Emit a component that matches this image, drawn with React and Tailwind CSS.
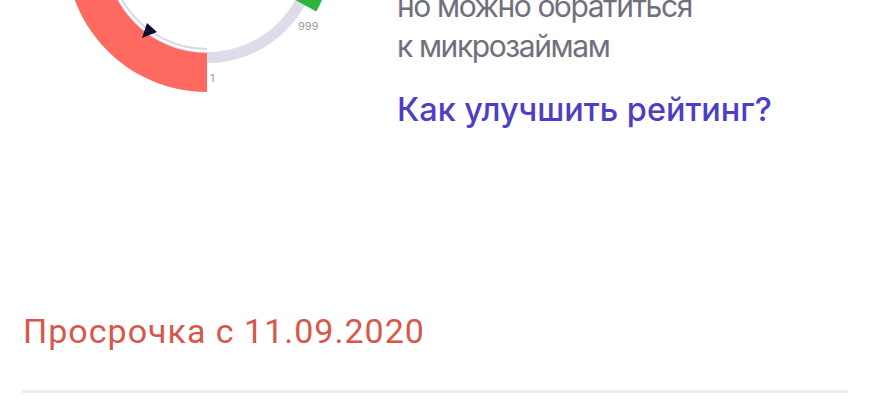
import React from "react";

const CX = 207;
const CY = -49;

function pt(r, deg) {
  const a = (deg * Math.PI) / 180;
  return [CX + r * Math.cos(a), CY + r * Math.sin(a)];
}

function sector(r1, r2, a1, a2) {
  const large = Math.abs(a2 - a1) > 180 ? 1 : 0;
  const [x1, y1] = pt(r2, a1);
  const [x2, y2] = pt(r2, a2);
  const [x3, y3] = pt(r1, a2);
  const [x4, y4] = pt(r1, a1);
  return `M${x1} ${y1} A${r2} ${r2} 0 ${large} 1 ${x2} ${y2} L${x3} ${y3} A${r1} ${r1} 0 ${large} 0 ${x4} ${y4} Z`;
}

function Gauge() {
  return (
    <svg
      width="390"
      height="110"
      viewBox="0 -14 390 110"
      className="block shrink-0"
    >
      <circle cx={CX} cy={CY} r={106.5} fill="none" stroke="#dcdde8" strokeWidth="11" />
      <path d={sector(97, 99, 90, 200)} fill="#d6d8e4" />
      <path d={sector(102, 141, 90, 200)} fill="#ff6a60" />
      <path d={sector(100, 125, 330, 389)} fill="#2bb53a" />
      <polygon points="147,23 157,32 142,38" fill="#0b0f2e" />
      <text x="298" y="30" fontSize="11" fill="#9c9ca4" fontFamily="Inter, sans-serif">999</text>
      <text x="210" y="82" fontSize="11" fill="#9c9ca4" fontFamily="Inter, sans-serif">1</text>
    </svg>
  );
}

export default function App() {
  return (
    <div className="w-[870px] h-[400px] overflow-hidden bg-white">
      <div className="flex items-start -mt-[14px]">
        <Gauge />
        <div className="ml-[7px] flex flex-col font-['Inter',sans-serif]">
          <div className="text-[30px] leading-[40px] tracking-[-1.4px] text-[#70707c] whitespace-nowrap">
            но можно обратиться
          </div>
          <div className="text-[30px] leading-[40px] tracking-[-1.4px] text-[#70707c] whitespace-nowrap">
            к микрозаймам
          </div>
          <div className="mt-[24px] text-[32.4px] leading-[40px] font-medium text-[#4d3ec5] whitespace-nowrap">
            Как улучшить рейтинг?
          </div>
        </div>
      </div>
      <div className="mt-[181px] pl-[23px] font-['Roboto',sans-serif] text-[34px] leading-[40px] tracking-[1px] text-[#d8574b] whitespace-nowrap">
        Просрочка с 11.09.2020
      </div>
      <div className="mt-[39px] mx-[22px] h-[3px] bg-[#ebebf2]" />
    </div>
  );
}
